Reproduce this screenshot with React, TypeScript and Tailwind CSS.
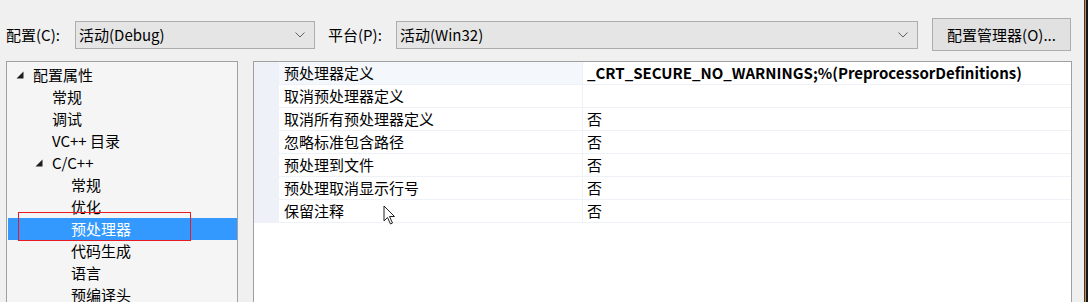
import React from "react";

const font = { fontFamily: '"Noto Sans CJK SC", "Noto Sans", sans-serif' };

function Chevron() {
  return (
    <svg width="10" height="6" viewBox="0 0 10 6" className="shrink-0">
      <path d="M0.5 0.5 L5 5 L9.5 0.5" fill="none" stroke="#606060" strokeWidth="1" />
    </svg>
  );
}

function Tri() {
  return (
    <svg width="8" height="8" viewBox="0 0 8 8" className="shrink-0">
      <polygon points="7.5,0.5 7.5,7.5 0.5,7.5" fill="#1e1e1e" />
    </svg>
  );
}

type TreeItem = { label: string; level: number; expanded?: boolean; selected?: boolean };

const tree: TreeItem[] = [
  { label: "配置属性", level: 0, expanded: true },
  { label: "常规", level: 1 },
  { label: "调试", level: 1 },
  { label: "VC++ 目录", level: 1 },
  { label: "C/C++", level: 1, expanded: true },
  { label: "常规", level: 2 },
  { label: "优化", level: 2 },
  { label: "预处理器", level: 2, selected: true },
  { label: "代码生成", level: 2 },
  { label: "语言", level: 2 },
  { label: "预编译头", level: 2 },
];

const props: { name: string; value: string; bold?: boolean }[] = [
  { name: "预处理器定义", value: "_CRT_SECURE_NO_WARNINGS;%(PreprocessorDefinitions)", bold: true },
  { name: "取消预处理器定义", value: "" },
  { name: "取消所有预处理器定义", value: "否" },
  { name: "忽略标准包含路径", value: "否" },
  { name: "预处理到文件", value: "否" },
  { name: "预处理取消显示行号", value: "否" },
  { name: "保留注释", value: "否" },
];

export default function App() {
  return (
    <div
      className="w-[1088px] h-[302px] overflow-hidden bg-[#f0f0f0] flex text-[15px] text-black"
      style={font}
    >
      <div className="w-[1084px] flex flex-col">
        {/* top bar */}
        <div className="mt-[18px] h-[33px] flex items-center">
          <span className="ml-[6px] w-[69px] leading-[20px]">配置(C):</span>
          <div className="w-[240px] h-[28px] bg-[#e5e5e5] border border-[#adadad] flex items-center pl-[3px] pr-[9px]">
            <span className="flex-1 leading-[20px]">活动(Debug)</span>
            <Chevron />
          </div>
          <span className="ml-[13px] w-[68px] leading-[20px]">平台(P):</span>
          <div className="w-[522px] h-[28px] bg-[#e5e5e5] border border-[#adadad] flex items-center pl-[3px] pr-[9px]">
            <span className="flex-1 leading-[20px]">活动(Win32)</span>
            <Chevron />
          </div>
          <div className="ml-[14px] w-[139px] h-[33px] bg-[#e1e1e1] border border-[#adadad] flex items-center justify-center">
            <span className="leading-[20px]">配置管理器(O)...</span>
          </div>
        </div>

        {/* body */}
        <div className="mt-[10px] flex flex-1 min-h-0">
          {/* tree */}
          <div className="ml-[6px] w-[232px] border-l border-t border-r border-[#a0a0a0] bg-[#f5f5f5] pt-[2px] pl-[1px] relative">
            {tree.map((t, i) => (
              <div
                key={i}
                className={
                  "h-[22px] flex items-center " +
                  (t.selected ? "bg-[#3399ff] text-white" : "")
                }
              >
                <div
                  className="flex items-center justify-end shrink-0"
                  style={{ width: t.level === 0 ? 25 : t.level === 1 ? 44 : 63 }}
                >
                  {t.expanded ? (
                    <span className="mr-[9px] flex">
                      <Tri />
                    </span>
                  ) : null}
                </div>
                <span className="leading-[20px] whitespace-nowrap">{t.label}</span>
              </div>
            ))}
            <div className="absolute left-[11px] top-[150px] w-[173px] h-[29px] border border-[#e81b23]" />
          </div>

          {/* property grid */}
          <div className="ml-[15px] w-[819px] border-l border-t border-r border-[#a0a0a0] bg-white relative">
            {props.map((p, i) => (
              <div key={i} className="h-[23px] flex border-b border-[#eef1f6]">
                <div className="w-[25px] bg-[#eef2f8] shrink-0" />
                <div
                  className={
                    "w-[304px] shrink-0 pl-[5px] flex items-center border-r border-[#eef1f6] " +
                    (i === 0 ? "bg-[#f4f7fb]" : "")
                  }
                >
                  <span className="leading-[20px] whitespace-nowrap">{p.name}</span>
                </div>
                <div className="flex-1 pl-[4px] flex items-center">
                  <span
                    className={"leading-[20px] whitespace-nowrap " + (p.bold ? "font-bold" : "")}
                  >
                    {p.value}
                  </span>
                </div>
              </div>
            ))}
            {/* mouse cursor */}
            <svg
              className="absolute left-[129px] top-[143px]"
              width="14"
              height="21"
              viewBox="0 0 14 21"
            >
              <path
                d="M1 1 L1 16 L4.5 12.5 L7.5 19 L9.5 18 L6.5 11.5 L11.5 11.5 Z"
                fill="white"
                stroke="#222"
                strokeWidth="1"
                strokeLinejoin="miter"
              />
            </svg>
          </div>
        </div>
      </div>
      <div className="w-[1px] bg-[#3a3a3a]" />
      <div className="w-[1px] bg-[#c9874d]" />
      <div className="w-[2px] bg-[#161616]" />
    </div>
  );
}
